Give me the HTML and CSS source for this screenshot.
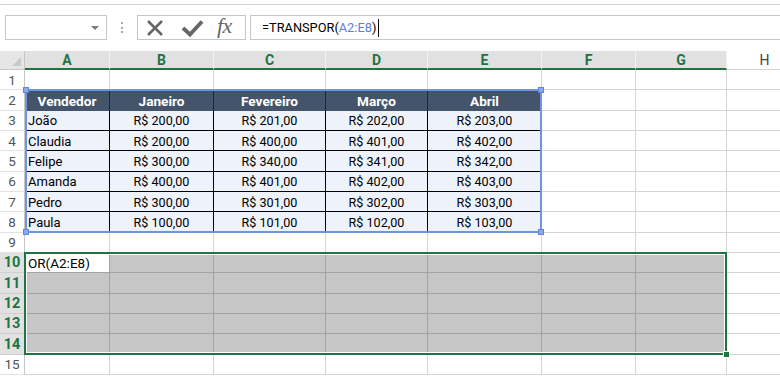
FILE: index.html
```html
<!DOCTYPE html>
<html lang="pt-BR">
<head>
  <meta charset="UTF-8" />
  <title>TRANSPOR</title>
  <link rel="stylesheet" href="styles.css">
</head>
<body>
  <div class="formula-bar">
    <div class="name-box"><span class="caret"></span></div>
    <div class="grip"><span></span></div>
    <div class="fx-buttons">
      <svg width="70" height="23" viewBox="0 0 70 23">
        <path d="M10 5 L24 19 M24 5 L10 19" stroke="#666" stroke-width="2.6" fill="none" />
        <path d="M45 12 L52 18.5 L64 5.5" stroke="#666" stroke-width="3.8" fill="none" />
      </svg>
      <span class="fx">fx</span>
    </div>
    <div class="formula">=TRANSPOR(<span class="ref">A2:E8</span>)<span class="cursor"></span></div>
  </div>

  <div class="sheet-wrap">
    <div class="sheet" id="sheet"></div>
    <div class="marks">
      <div class="range">
        <i class="handle tl"></i><i class="handle tr"></i>
        <i class="handle bl"></i><i class="handle br"></i>
      </div>
      <div class="selection"><i class="fill-handle"></i></div>
    </div>
  </div>

  <script>
    const cols = ['A', 'B', 'C', 'D', 'E', 'F', 'G', 'H'];
    const table = {
      2: ['Vendedor', 'Janeiro', 'Fevereiro', 'Março', 'Abril'],
      3: ['João', 200, 201, 202, 203],
      4: ['Claudia', 200, 400, 401, 402],
      5: ['Felipe', 300, 340, 341, 342],
      6: ['Amanda', 400, 401, 402, 403],
      7: ['Pedro', 300, 301, 302, 303],
      8: ['Paula', 100, 101, 102, 103]
    };

    const sheet = document.getElementById('sheet');

    function add(cls, text) {
      const div = document.createElement('div');
      div.className = cls;
      if (text !== undefined) div.textContent = text;
      sheet.appendChild(div);
    }

    // linha dos cabeçalhos de coluna
    add('corner');
    cols.forEach((c, i) => add(i < 7 ? 'col-head picked' : 'col-head', c));

    for (let r = 1; r <= 15; r++) {
      const picked = r >= 10 && r <= 14;
      add(picked ? 'row-head picked' : 'row-head', r);

      cols.forEach((c, i) => {
        const row = table[r];
        if (row && i < 5) {
          if (r === 2) {
            add('cell th', row[i]);
          } else if (i === 0) {
            add('cell td name', row[i]);
          } else {
            add('cell td money', 'R$ ' + row[i] + ',00');
          }
        } else if (picked && i < 7) {
          if (r === 10 && i === 0) add('cell active', 'OR(A2:E8)');
          else add('cell sel');
        } else {
          add('cell');
        }
      });
    }
  </script>
</body>
</html>
```

FILE: styles.css
```css
* {
  box-sizing: border-box;
}
body {
  margin: 0;
  width: 780px;
  height: 376px;
  overflow: hidden;
  background: #fff;
  font-family: Roboto, 'Liberation Sans', sans-serif;
  color: #000;
}
.formula-bar {
  margin-top: 4px;
  height: 47px;
  border-top: 1px solid #d4d4d4;
  padding-top: 10px;
  display: flex;
  align-items: flex-start;
}
.name-box {
  width: 102px;
  height: 25px;
  margin-left: 5px;
  border: 1px solid #c6c6c6;
  display: flex;
  justify-content: flex-end;
  align-items: center;
  padding-right: 7px;
}
.caret {
  border-left: 4px solid transparent;
  border-right: 4px solid transparent;
  border-top: 4px solid #7a7a7a;
}
.grip {
  width: 30px;
  height: 25px;
  display: flex;
  justify-content: center;
  align-items: center;
}
.grip span {
  height: 11px;
  border-left: 2px dotted #a8a8a8;
}
.fx-buttons {
  width: 109px;
  height: 25px;
  border: 1px solid #c6c6c6;
  display: flex;
  align-items: center;
}
.fx {
  margin-left: 9px;
  font-family: 'Liberation Serif', serif;
  font-style: italic;
  font-size: 22px;
  color: #666;
  letter-spacing: -0.5px;
  line-height: 1;
  margin-top: -4px;
}
.formula {
  flex: 1;
  height: 25px;
  margin-left: 4px;
  margin-right: -2px;
  border: 1px solid #c6c6c6;
  padding-left: 11px;
  font-size: 12.8px;
  line-height: 23px;
  white-space: nowrap;
}
.formula .ref {
  color: #5a7fd6;
}
.cursor {
  display: inline-block;
  width: 1px;
  height: 18px;
  background: #000;
  vertical-align: middle;
  margin-left: 2px;
  margin-top: -2px;
}

.sheet-wrap {
  position: relative;
  width: 803px;
}
.sheet, .marks {
  display: grid;
  grid-template-columns: 25px 85px 104px 112px 102px 114px 94px 91px 76px;
  grid-template-rows: 19px repeat(15, 20.35px);
}
.marks {
  position: absolute;
  inset: 0;
  pointer-events: none;
}
.corner {
  background: #e6e6e6;
  border-right: 1px solid #c6c6c6;
  border-bottom: 1px solid #c6c6c6;
  position: relative;
}
.corner::after {
  content: '';
  position: absolute;
  right: 3px;
  bottom: 3px;
  border-left: 9px solid transparent;
  border-bottom: 9px solid #c9c9c9;
}
.col-head {
  border-right: 1px solid #d0d0d0;
  border-bottom: 1px solid #d4d4d4;
  display: flex;
  justify-content: center;
  align-items: center;
  font-size: 14px;
  color: #444;
}
.col-head.picked {
  background: #e1e1e1;
  border-right-color: #f2f2f2;
  border-bottom: 2px solid #217346;
  color: #217346;
  font-weight: bold;
}
.row-head {
  border-right: 1px solid #c6c6c6;
  border-bottom: 1px solid #e2e2e2;
  display: flex;
  justify-content: center;
  align-items: center;
  font-size: 13.5px;
  color: #555;
}
.row-head.picked {
  background: #e1e1e1;
  color: #217346;
  font-weight: bold;
  font-size: 14.5px;
  border-bottom-color: #cfcfcf;
}
.cell {
  border-right: 1px solid #d4d4d4;
  border-bottom: 1px solid #d4d4d4;
  display: flex;
  align-items: center;
  padding: 1px 3px 0;
  font-size: 13px;
  white-space: nowrap;
}
.cell.th {
  background: #44546a;
  color: #fff;
  font-weight: bold;
  font-size: 13.6px;
  justify-content: center;
  border-right-color: #1e2633;
  border-bottom-color: #44546a;
}
.cell.td {
  background: #edf2fb;
  border-right-color: #000;
  border-bottom-color: #000;
}
.cell.money {
  justify-content: center;
  font-size: 12.6px;
}
.cell.sel {
  background: #c6c6c6;
  border-right-color: #a3a3a3;
  border-bottom-color: #a3a3a3;
}
.cell.active {
  background: #fff;
  border-right-color: #a3a3a3;
  border-bottom-color: #a3a3a3;
  font-size: 13.5px;
}

.range {
  grid-column: 2 / 7;
  grid-row: 3 / 10;
  margin: -1px 0 0 0;
  border: 2px solid #7094e0;
  position: relative;
}
.handle {
  position: absolute;
  width: 6px;
  height: 6px;
  background: #8aa8ec;
  border: 1px solid #5f85db;
}
.handle.tl { left: -4px; top: -4px; }
.handle.tr { right: -4px; top: -4px; }
.handle.bl { left: -4px; bottom: -4px; }
.handle.br { right: -4px; bottom: -4px; }

.selection {
  grid-column: 2 / 9;
  grid-row: 11 / 16;
  margin: -1px 0 0 -1px;
  border: 2px solid #217346;
  box-shadow: inset 0 0 0 1px #fff;
  position: relative;
}
.fill-handle {
  position: absolute;
  right: -5px;
  bottom: -5px;
  width: 7px;
  height: 7px;
  background: #217346;
  border: 1px solid #fff;
}
```
